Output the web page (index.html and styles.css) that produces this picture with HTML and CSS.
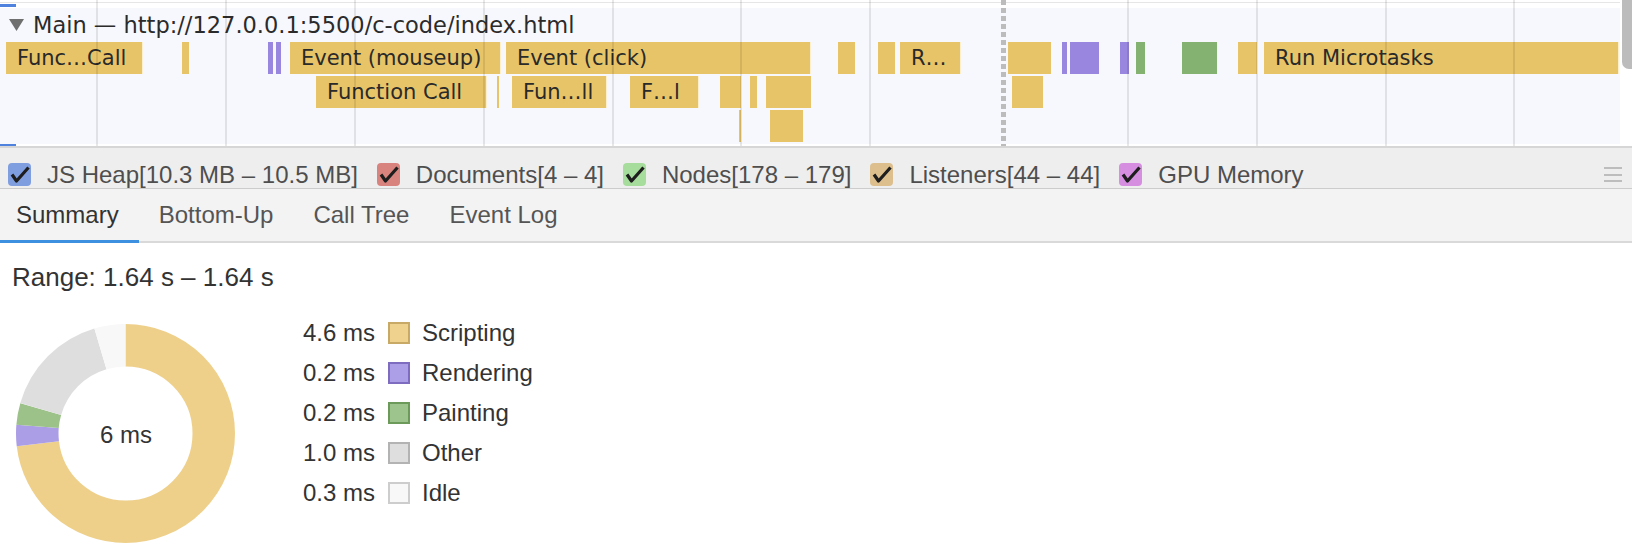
FILE: index.html
```html
<!DOCTYPE html>
<html>
<head>
<meta charset="utf-8">
<link rel="stylesheet" href="styles.css">
</head>
<body>
<div class="timeline">
  <div class="topstrip"></div>
  <div class="flame">
    <div class="track-title">
      <svg class="tri" width="15" height="12" viewBox="0 0 15 12"><polygon points="0,0 15,0 7.5,12" fill="#6f6f6f"/></svg>
      <span>Main — http://127.0.0.1:5500/c-code/index.html</span>
    </div>
    <div class="b t r1" style="left:6px;width:137px">Func…Call</div>
    <div class="b r1" style="left:182px;width:7px"></div>
    <div class="b p r1" style="left:268px;width:5px"></div>
    <div class="b p r1" style="left:276px;width:5px"></div>
    <div class="b t r1" style="left:290px;width:211px">Event (mouseup)</div>
    <div class="b t r1" style="left:506px;width:305px">Event (click)</div>
    <div class="b r1" style="left:838px;width:17px"></div>
    <div class="b r1" style="left:878px;width:17px"></div>
    <div class="b t r1" style="left:900px;width:61px">R…</div>
    <div class="b r1" style="left:1008px;width:43px"></div>
    <div class="b p r1" style="left:1062px;width:5px"></div>
    <div class="b p r1" style="left:1070px;width:29px"></div>
    <div class="b p r1" style="left:1120px;width:9px"></div>
    <div class="b g r1" style="left:1136px;width:9px"></div>
    <div class="b g r1" style="left:1182px;width:35px"></div>
    <div class="b r1" style="left:1238px;width:19px"></div>
    <div class="b t r1" style="left:1264px;width:355px">Run Microtasks</div>

    <div class="b t r2" style="left:316px;width:171px">Function Call</div>
    <div class="b r2" style="left:497px;width:2px"></div>
    <div class="b t r2" style="left:512px;width:95px">Fun…ll</div>
    <div class="b t r2" style="left:630px;width:69px">F…l</div>
    <div class="b r2" style="left:720px;width:21px"></div>
    <div class="b r2" style="left:750px;width:7px"></div>
    <div class="b r2" style="left:766px;width:45px"></div>
    <div class="b r2" style="left:1012px;width:31px"></div>

    <div class="b r3" style="left:739px;width:2px"></div>
    <div class="b r3" style="left:770px;width:33px"></div>
  </div>
  <div class="selmark selmark-top"></div>
  <div class="selmark selmark-bottom"></div>
  <div class="gl" style="left:96px"></div>
  <div class="gl" style="left:225px"></div>
  <div class="gl" style="left:354px"></div>
  <div class="gl" style="left:483px"></div>
  <div class="gl" style="left:612px"></div>
  <div class="gl" style="left:740px"></div>
  <div class="gl" style="left:869px"></div>
  <div class="gl" style="left:1127px"></div>
  <div class="gl" style="left:1256px"></div>
  <div class="gl" style="left:1385px"></div>
  <div class="gl" style="left:1513px"></div>
  <div class="dashed"></div>
  <div class="thumb"></div>
</div>

<div class="counters">
  <label class="counter"><span class="cb cb-heap"><svg width="23" height="23" viewBox="0 0 23 23"><path d="M4 11.5 L8.5 18 L20.5 4.5" fill="none" stroke="#1e1e1e" stroke-width="3.2" stroke-linejoin="round"/></svg></span>JS Heap[10.3 MB – 10.5 MB]</label>
  <label class="counter"><span class="cb cb-docs"><svg width="23" height="23" viewBox="0 0 23 23"><path d="M4 11.5 L8.5 18 L20.5 4.5" fill="none" stroke="#1e1e1e" stroke-width="3.2" stroke-linejoin="round"/></svg></span>Documents[4 – 4]</label>
  <label class="counter"><span class="cb cb-nodes"><svg width="23" height="23" viewBox="0 0 23 23"><path d="M4 11.5 L8.5 18 L20.5 4.5" fill="none" stroke="#1e1e1e" stroke-width="3.2" stroke-linejoin="round"/></svg></span>Nodes[178 – 179]</label>
  <label class="counter"><span class="cb cb-listeners"><svg width="23" height="23" viewBox="0 0 23 23"><path d="M4 11.5 L8.5 18 L20.5 4.5" fill="none" stroke="#1e1e1e" stroke-width="3.2" stroke-linejoin="round"/></svg></span>Listeners[44 – 44]</label>
  <label class="counter"><span class="cb cb-gpu"><svg width="23" height="23" viewBox="0 0 23 23"><path d="M4 11.5 L8.5 18 L20.5 4.5" fill="none" stroke="#1e1e1e" stroke-width="3.2" stroke-linejoin="round"/></svg></span>GPU Memory</label>
  <span class="menu"><i></i><i></i><i></i></span>
</div>

<div class="tabs">
  <div class="tab active">Summary</div>
  <div class="tab">Bottom-Up</div>
  <div class="tab">Call Tree</div>
  <div class="tab">Event Log</div>
</div>

<div class="summary">
  <div class="range">Range: 1.64 s – 1.64 s</div>
  <div class="breakdown">
    <svg class="donut" width="222" height="222" viewBox="0 0 222 222">
      <g transform="rotate(-90 110.5 110.5)" fill="none" stroke-width="42.5">
        <circle cx="110.5" cy="110.5" r="88.25" stroke="#eed08b" stroke-dasharray="404.87 554.49" stroke-dashoffset="0"/>
        <circle cx="110.5" cy="110.5" r="88.25" stroke="#ab9de6" stroke-dasharray="17.6 554.49" stroke-dashoffset="-404.87"/>
        <circle cx="110.5" cy="110.5" r="88.25" stroke="#9cc28a" stroke-dasharray="17.6 554.49" stroke-dashoffset="-422.47"/>
        <circle cx="110.5" cy="110.5" r="88.25" stroke="#dedede" stroke-dasharray="88.01 554.49" stroke-dashoffset="-440.08"/>
        <circle cx="110.5" cy="110.5" r="88.25" stroke="#f8f8f8" stroke-dasharray="26.4 554.49" stroke-dashoffset="-528.09"/>
      </g>
      <text class="donut-label" x="111" y="120" text-anchor="middle">6 ms</text>
    </svg>
    <div class="legend">
      <div class="row"><span class="val">4.6 ms</span><span class="sw sw-script"></span><span>Scripting</span></div>
      <div class="row"><span class="val">0.2 ms</span><span class="sw sw-render"></span><span>Rendering</span></div>
      <div class="row"><span class="val">0.2 ms</span><span class="sw sw-paint"></span><span>Painting</span></div>
      <div class="row"><span class="val">1.0 ms</span><span class="sw sw-other"></span><span>Other</span></div>
      <div class="row"><span class="val">0.3 ms</span><span class="sw sw-idle"></span><span>Idle</span></div>
    </div>
  </div>
</div>
</body>
</html>
```
FILE: styles.css
```css
* { box-sizing: border-box; }
html, body { margin: 0; padding: 0; background: #fff; }
body {
  width: 1632px;
  height: 560px;
  overflow: hidden;
  font-family: "Liberation Sans", Arial, sans-serif;
  color: #333;
}

/* ---------- flame chart ---------- */
.timeline {
  position: relative;
  height: 146px;
  width: 1632px;
}
.topstrip {
  height: 8px;
  width: 1620px;
  background: linear-gradient(#fff 0 2px, #e6e6e6 2px 3px, #fff 3px);
}
.flame {
  position: relative;
  height: 136px;
  width: 1620px;
  background: #f7f8fd;
}
.track-title {
  display: flex;
  align-items: center;
  height: 34px;
  padding-left: 9px;
  font-family: "DejaVu Sans", sans-serif;
  font-size: 22.5px;
  color: #2b2b2b;
  white-space: nowrap;
}
.tri { margin-right: 9px; flex: none; }

.b {
  position: absolute;
  height: 32px;
  background: #e8c468;
  font-family: "DejaVu Sans", sans-serif;
  font-size: 21px;
  line-height: 32px;
  color: #2a2a2a;
  white-space: nowrap;
  overflow: hidden;
}
.b.t {
  padding-left: 11px;
  border-right: 1px solid rgba(255, 250, 230, 0.8);
}
.b.p { background: #9986de; }
.b.g { background: #84b271; }
.r1 { top: 34px; }
.r2 { top: 68px; }
.r3 { top: 102px; }

.gl {
  position: absolute;
  top: 0;
  height: 146px;
  width: 2px;
  background: rgba(0, 0, 0, 0.09);
}
.dashed {
  position: absolute;
  left: 1001px;
  top: 0;
  width: 5px;
  height: 146px;
  background: repeating-linear-gradient(to bottom, #bcbcbc 0 5px, transparent 5px 8px);
}
.thumb {
  position: absolute;
  right: 0;
  top: 0;
  width: 10px;
  height: 69px;
  background: #bcbcbc;
  border-radius: 0 0 0 7px;
}
.selmark {
  position: absolute;
  left: 0;
  width: 16px;
  height: 3px;
  background: #4f82df;
}
.selmark-top { top: 4px; }
.selmark-bottom { top: 144px; height: 2px; }

/* ---------- counters ---------- */
.counters {
  display: flex;
  align-items: center;
  gap: 19px;
  height: 43px;
  padding: 13px 0 0 8px;
  background: #eeeeee;
  border-top: 2px solid #d6d6d6;
  border-bottom: 1px solid #cccccc;
  font-size: 24px;
  color: #4e4e4e;
  white-space: nowrap;
}
.counter { display: flex; align-items: center; }
.cb {
  width: 23px;
  height: 23px;
  border-radius: 4px;
  margin-right: 16px;
  display: block;
  flex: none;
}
.cb svg { display: block; }
.cb-heap { background: #7f9ee0; }
.cb-docs { background: #d9837e; }
.cb-nodes { background: #a6dd9c; }
.cb-listeners { background: #ddbf8e; }
.cb-gpu { background: #d68ee0; }

.menu {
  margin-left: auto;
  margin-right: 10px;
  width: 18px;
  height: 15px;
  display: flex;
  flex-direction: column;
  justify-content: space-between;
}
.menu i {
  display: block;
  height: 2px;
  background: #bdbdbd;
}

/* ---------- tabs ---------- */
.tabs {
  display: flex;
  height: 54px;
  background: #f3f3f3;
  box-shadow: inset 0 -2px 0 #d9d9d9;
}
.tab {
  height: 54px;
  padding: 0 20px;
  line-height: 51px;
  font-size: 24px;
  color: #555;
  border-bottom: 3px solid transparent;
}
.tab.active {
  padding-left: 16px;
  color: #333;
  border-bottom-color: #3d8fe0;
}

/* ---------- summary ---------- */
.summary { padding-left: 12px; }
.range {
  padding-top: 19px;
  height: 49px;
  line-height: 30px;
  font-size: 26px;
  color: #333;
}
.breakdown {
  display: flex;
  align-items: flex-start;
  margin-top: 21px;
}
.donut {
  display: block;
  margin-left: 3px;
  margin-top: 10px;
  flex: none;
}
.donut-label {
  font-family: "Liberation Sans", Arial, sans-serif;
  font-size: 24px;
  fill: #333;
}
.legend {
  margin-left: 66px;
  font-size: 24px;
  color: #333;
}
.legend .row {
  display: flex;
  align-items: center;
  height: 40px;
  white-space: nowrap;
}
.val { width: 72px; text-align: right; }
.sw {
  width: 22px;
  height: 22px;
  margin: 0 12px 0 13px;
  border: 2px solid;
  flex: none;
}
.sw-script { background: #eed28d; border-color: #c8a966; }
.sw-render { background: #ac9fe8; border-color: #7d6cc0; }
.sw-paint { background: #9dc48d; border-color: #6c9a5a; }
.sw-other { background: #dedede; border-color: #b3b3b3; }
.sw-idle { background: #f8f8f8; border-color: #cdcdcd; }
```
